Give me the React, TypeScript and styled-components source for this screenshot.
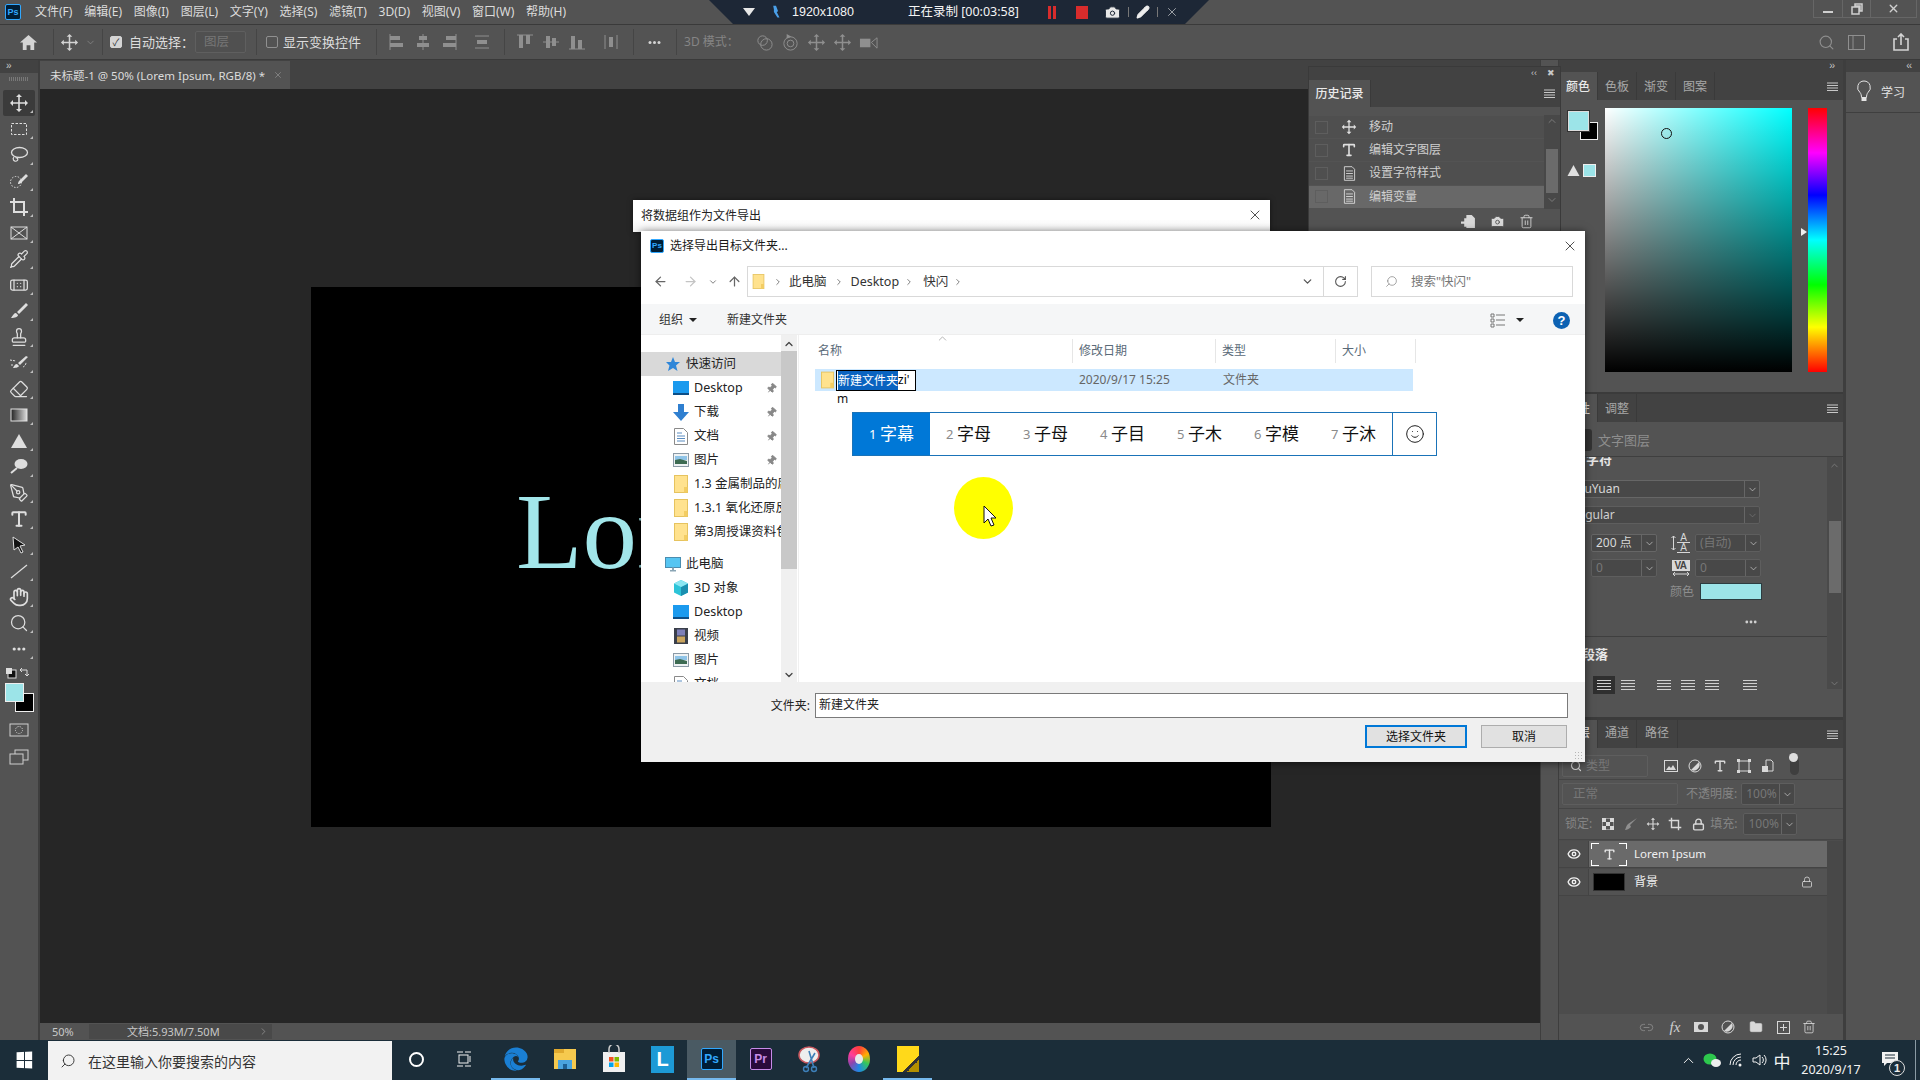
import React from "react";
import styled, { createGlobalStyle } from "styled-components";
import {
  Pipette, Bandage, Stamp, Eraser, PenTool, Type, Hand, Search, ChevronDown, ChevronUp, ChevronRight,
  X, ArrowLeft, ArrowRight, ArrowUp, RotateCw, Smile, Eye, Lock, Trash2, Camera, Link2, Folder,
  Pencil, Pin,
} from "lucide-react";
import { FaEdge } from "react-icons/fa";

const CJK = `"Noto Sans","Noto Sans CJK SC",sans-serif`;

const Global = createGlobalStyle`
  html, body { margin: 0; padding: 0; background: #535353; overflow: hidden; }
  * { box-sizing: border-box; }
  body { font-family: ${CJK}; font-size: 12px; }
`;

/* ---------- drawn icons ---------- */
type IP = { s?: number; color?: string };
const Svg: React.FC<React.PropsWithChildren<IP & { vb?: string; h?: number }>> = ({ s = 20, h, vb = "0 0 20 20", color, children }) => (
  <svg width={s} height={h ?? s} viewBox={vb} fill="currentColor" style={color ? { color } : undefined}>{children}</svg>
);
const MoveIco = (p: IP) => <Svg {...p}><path d="M10 1l3 3h-2.2v5.2H16V7l3 3-3 3v-2.2h-5.2V16H13l-3 3-3-3h2.2v-5.2H4V13l-3-3 3-3v2.2h5.2V4H7z" /></Svg>;
const Marquee = (p: IP) => <Svg {...p}><rect x="2.5" y="4.5" width="15" height="11" fill="none" stroke="currentColor" strokeDasharray="2.5 1.5" /></Svg>;
const Lasso = (p: IP) => <Svg {...p}><ellipse cx="10.5" cy="7.5" rx="8" ry="5" fill="none" stroke="currentColor" strokeWidth="1.3" /><path d="M5 12c-2 2 0 5 2.5 4s1-4-1-3" fill="none" stroke="currentColor" strokeWidth="1.2" /></Svg>;
const QuickSel = (p: IP) => <Svg {...p}><circle cx="7" cy="11" r="5.5" fill="none" stroke="currentColor" strokeDasharray="1.5 1.5" /><path d="M10 10l7-7 2 2-7 7c-1 1-3 1-3 1s0-2 1-3z" /></Svg>;
const CropIco = (p: IP) => <Svg {...p}><path d="M5 1v14h14M1 5h14v14" fill="none" stroke="currentColor" strokeWidth="2" /></Svg>;
const FrameIco = (p: IP) => <Svg {...p}><rect x="2" y="4" width="16" height="12" fill="none" stroke="currentColor" /><path d="M2 4l16 12M18 4L2 16" stroke="currentColor" /></Svg>;
const BrushIco = (p: IP) => <Svg {...p}><path d="M17 2l2 2-9 9-2-2zM7 12c-2 0-3 2-5 5 4 0 7-1 7-3z" /></Svg>;
const HistBrush = (p: IP) => <Svg {...p}><path d="M17 3l2 1-8 8-2-2zM8 11c-2 0-3 2-4 4 3 0 6-1 6-2z" /><path d="M1 7l6 1M4 12H1M14 14a5 5 0 0 0 3-5" fill="none" stroke="currentColor" strokeDasharray="2 1" /></Svg>;
const GradIco = (p: IP) => <Svg {...p}><defs><linearGradient id="gr1"><stop offset="0" stopColor="#222" /><stop offset="1" stopColor="#ddd" /></linearGradient></defs><rect x="2" y="4" width="16" height="12" fill="url(#gr1)" stroke="#e0e0e0" /></Svg>;
const TriIco = (p: IP) => <Svg {...p}><path d="M10 3l8 14H2z" /></Svg>;
const Dodge = (p: IP) => <Svg {...p}><ellipse cx="12" cy="7" rx="6.5" ry="5" /><path d="M8 11l-6 5" stroke="currentColor" strokeWidth="2" /></Svg>;
const PathSel = (p: IP) => <Svg {...p}><path d="M4 2l12 8-5 1 3 6-2 1-3-6-4 3z" fill="#111" stroke="#ddd" /></Svg>;
const LineIco = (p: IP) => <Svg {...p}><path d="M2 17L18 4" stroke="currentColor" strokeWidth="1.2" /></Svg>;
const Dots = (p: IP) => <Svg {...p}><circle cx="4" cy="10" r="2" /><circle cx="10" cy="10" r="2" /><circle cx="16" cy="10" r="2" /></Svg>;
const MaskIco = (p: IP) => <Svg {...p}><rect x="1" y="4" width="18" height="12" fill="none" stroke="currentColor" /><circle cx="10" cy="10" r="3.5" fill="none" stroke="currentColor" strokeDasharray="1.2 1.2" /></Svg>;
const ScreenIco = (p: IP) => <Svg {...p}><rect x="6" y="3" width="13" height="10" fill="none" stroke="currentColor" /><rect x="1" y="7" width="13" height="10" fill="#535353" stroke="currentColor" /></Svg>;
const Burger = () => <Svg s={13} vb="0 0 13 13"><path d="M1 3h11M1 5.5h11M1 8h11M1 10.5h11" stroke="currentColor" /></Svg>;
const DocIco = (p: IP) => <Svg {...p}><path d="M4 2h9l3 3v13H4z" fill="none" stroke="currentColor" /><path d="M6 7h8M6 10h8M6 13h8M6 15.5h8" stroke="currentColor" /></Svg>;
const Home = (p: IP) => <Svg {...p}><path d="M10 2l9 8h-3v8h-4v-5H8v5H4v-8H1z" /></Svg>;
const AlignIco: React.FC<{ kind: number }> = ({ kind }) => {
  const shapes: Record<number, React.ReactNode> = {
    0: <><path d="M3 2v16" stroke="currentColor" /><rect x="3" y="4" width="10" height="4" /><rect x="3" y="11" width="13" height="4" /></>,
    1: <><path d="M10 2v16" stroke="currentColor" /><rect x="6" y="4" width="8" height="4" /><rect x="4" y="11" width="12" height="4" /></>,
    2: <><path d="M17 2v16" stroke="currentColor" /><rect x="7" y="4" width="10" height="4" /><rect x="4" y="11" width="13" height="4" /></>,
    3: <><path d="M3 4h14M3 16h14" stroke="currentColor" /><rect x="5" y="8" width="10" height="4" /></>,
    4: <><path d="M2 3h16" stroke="currentColor" /><rect x="4" y="3" width="4" height="13" /><rect x="11" y="3" width="4" height="9" /></>,
    5: <><path d="M2 10h16" stroke="currentColor" /><rect x="5" y="4" width="4" height="12" /><rect x="11" y="6" width="4" height="8" /></>,
    6: <><path d="M2 17h16" stroke="currentColor" /><rect x="4" y="4" width="4" height="13" /><rect x="11" y="8" width="4" height="9" /></>,
    7: <><path d="M4 3v14M16 3v14" stroke="currentColor" /><rect x="8" y="5" width="4" height="10" /></>,
  };
  return <Svg s={20}>{shapes[kind]}</Svg>;
};
const Orbit = (p: IP) => <Svg {...p}><circle cx="8" cy="8" r="5" fill="none" stroke="currentColor" /><circle cx="12" cy="12" r="6" fill="none" stroke="currentColor" /></Svg>;
const Roll = (p: IP) => <Svg {...p}><circle cx="10" cy="11" r="7" fill="none" stroke="currentColor" /><circle cx="10" cy="11" r="3.5" fill="none" stroke="currentColor" /><path d="M6 1l5 3-5 2z" /></Svg>;
const Vid = (p: IP) => <Svg {...p}><rect x="1" y="6" width="11" height="9" /><path d="M13 10l6-5v11z" fill="none" stroke="currentColor" /></Svg>;
const FolderY: React.FC<{ w?: number; h?: number }> = ({ w = 14, h = 18 }) => (
  <svg width={w} height={h} viewBox="0 0 14 18"><rect x=".5" y=".5" width="13" height="17" fill="#ffe28e" stroke="#e6c35f" /><path d="M10 12v5.5h3.5V12z" fill="#f3cd63" /></svg>
);
const DesktopIco = () => <svg width="16" height="14" viewBox="0 0 16 14"><rect y="0" width="16" height="13" fill="#1b9aee" /><rect y="12" width="16" height="2" fill="#0d4e86" /></svg>;
const DownIco = () => <svg width="16" height="17" viewBox="0 0 16 17"><path d="M5 0h6v8h5l-8 9-8-9h5z" fill="#2f7fd0" /></svg>;
const DocBlue = () => <svg width="14" height="17" viewBox="0 0 14 17"><path d="M.5.5h9l4 4v12H.5z" fill="#fff" stroke="#8a8a8a" /><path d="M3 5h5M3 8h8M3 10.5h8M3 13h8" stroke="#5a8cc0" /></svg>;
const PicIco = () => <svg width="16" height="14" viewBox="0 0 16 14"><rect x=".5" y=".5" width="15" height="13" fill="#eef2f4" stroke="#8b9aa6" /><rect x="2" y="3" width="12" height="4" fill="#8fc4e8" /><path d="M2 7l5-1 7 2v3H2z" fill="#3d6b52" /></svg>;
const StarIco = () => <svg width="16" height="16" viewBox="0 0 16 16"><path d="M8 1l2 5h5l-4 3.5 1.5 5.5L8 12l-5 3 1.5-5.5L1 6h5z" fill="#2f86d8" /></svg>;
const PcIco = () => <svg width="16" height="15" viewBox="0 0 16 15"><rect x=".5" y=".5" width="15" height="10" fill="#56c5f2" stroke="#4a8db0" /><path d="M5 13h6v1.5H5zM7 10.5h2V13H7z" fill="#8aa5b5" /></svg>;
const CubeIco = () => <svg width="16" height="16" viewBox="0 0 16 16"><path d="M8 0l7 3.5v9L8 16l-7-3.5v-9z" fill="#2cc4d8" /><path d="M8 7l7-3.5v9L8 16z" fill="#1a8fb0" /><path d="M8 0l7 3.5L8 7 1 3.5z" fill="#8be6f2" /></svg>;
const FilmIco = () => <svg width="14" height="16" viewBox="0 0 14 16"><rect width="14" height="16" fill="#3a3f4a" /><rect x="3" y="1.5" width="8" height="6" fill="#7d7fb8" /><rect x="3" y="8.5" width="8" height="6" fill="#c9a45e" /></svg>;
const PsTile = styled.span<{ $s: number; $fs: number; $c?: string; $bg?: string }>`
  width: ${(p) => p.$s}px; height: ${(p) => p.$s}px; display: inline-flex; align-items: center; justify-content: center;
  background: ${(p) => p.$bg ?? "#001e36"}; color: ${(p) => p.$c ?? "#31a8ff"}; border: 1.5px solid ${(p) => p.$c ?? "#31a8ff"};
  border-radius: 2px; font: bold ${(p) => p.$fs}px/1 "Liberation Sans", sans-serif;
`;

/* ---------- root ---------- */
const Root = styled.div`position: relative; width: 1920px; height: 1080px; overflow: hidden; background: #535353; display: flex; flex-direction: column; color: #d4d4d4;`;

/* ---------- menu ---------- */
const MenuBar = styled.div`height: 25px; flex: none; display: flex; align-items: center; padding: 0 3px 0 5px; background: #535353; border-bottom: 1px solid #3a3a3a;`;
const MenuList = styled.nav`display: flex; margin-left: 14px; gap: 11.7px; font-size: 12px; line-height: 16px; color: #dcdcdc; white-space: nowrap;`;
const WinBox = styled.div`margin-left: auto; display: flex; height: 18px; align-self: flex-start; border: 1px solid #666; border-top: 0; color: #cfcfcf;`;
const WinBtn = styled.span<{ $w: number }>`width: ${(p) => p.$w}px; display: flex; align-items: center; justify-content: center; border-left: 1px solid #666; &:first-child { border-left: 0; }`;

/* ---------- recording overlay ---------- */
const RecBar = styled.div`
  position: absolute; left: 709px; top: 0; width: 500px; height: 24px; background: #1d2736; color: #f4f4f4;
  clip-path: polygon(0 0, 100% 0, 95.2% 100%, 4.8% 100%); display: flex; align-items: center; font-size: 12.5px; line-height: 16px; white-space: nowrap;
`;
const RecCaret = styled.span`margin-left: 34px; width: 0; height: 0; border-left: 6px solid transparent; border-right: 6px solid transparent; border-top: 8px solid #e8e8e8;`;
const RecPlane = styled.span`margin-left: 14px; display: flex;`;
const RecSize = styled.span`margin-left: 9px; font: 12.5px/16px "Liberation Sans", sans-serif;`;
const RecTime = styled.span`margin-left: 54px; width: 110px; `;
const RecPause = styled.span`margin-left: 30px; width: 8px; height: 13px; border-left: 3px solid #d82c2c; border-right: 3px solid #d82c2c;`;
const RecStop = styled.span`margin-left: 20px; width: 12px; height: 13px; background: #d82c2c;`;
const RecSep = styled.span`width: 1px; height: 10px; background: #777; margin: 0 7px;`;
const RecCam = styled.span`margin-left: 16px; display: flex;`;
const RecBtn = styled.span`display: flex;`;

/* ---------- options ---------- */
const OptionsBar = styled.div`height: 35px; flex: none; display: flex; align-items: center; padding: 0 4px 0 3px; background: #535353; border-bottom: 1px solid #3a3a3a; font-size: 13px; line-height: 18px; white-space: nowrap;`;
const OptSep = styled.span`width: 1px; height: 26px; background: #454545;`;
const OptIcon = styled.span<{ $w: number; $ml?: number; $dim?: boolean }>`
  width: ${(p) => p.$w}px; margin-left: ${(p) => p.$ml ?? 0}px; display: flex; align-items: center; justify-content: center; flex: none;
  color: ${(p) => (p.$dim ? "#8f8f8f" : "#d4d4d4")};
`;
const CheckBox = styled.span<{ $on?: boolean; $ml: number }>`
  width: 12px; height: 12px; margin-left: ${(p) => p.$ml}px; border-radius: 2px; flex: none; display: flex; align-items: center; justify-content: center;
  background: ${(p) => (p.$on ? "#d4d4d4" : "transparent")}; border: 1px solid ${(p) => (p.$on ? "#d4d4d4" : "#909090")}; color: #333; font-size: 10px; line-height: 1;
`;
const OptLabel = styled.span<{ $ml: number; $dim?: boolean }>`margin-left: ${(p) => p.$ml}px; color: ${(p) => (p.$dim ? "#858585" : "#dcdcdc")}; font-size: ${(p) => (p.$dim ? 12 : 13)}px; flex: none;`;
const OptSelect = styled.span`margin-left: 1px; width: 51px; height: 22px; border: 1px solid #5f5f5f; background: #505050; color: #777; font-size: 12.5px; line-height: 20px; padding-left: 8px; flex: none; border-radius: 2px;`;
const OptSpace = styled.span`flex: 1;`;

/* ---------- workspace ---------- */
const Workspace = styled.div`height: 980px; flex: none; display: flex;`;
const ToolStrip = styled.aside`width: 40px; flex: none; background: #535353; border-right: 2px solid #3e3e3e; display: flex; flex-direction: column; align-items: stretch;`;
const StripHead = styled.div`height: 13px; background: #424242; color: #c8c8c8; font: 10px/12px "Liberation Sans", sans-serif; padding-left: 6px; letter-spacing: -1px;`;
const Grip = styled.div`height: 17px; display: flex; justify-content: center; padding-top: 4px; &::before { content: ""; width: 20px; height: 4px; background: repeating-linear-gradient(90deg, #787878 0 1px, transparent 1px 2px); }`;
const ToolBtn = styled.div<{ $on?: boolean }>`
  height: 26px; margin: 0 3px; position: relative; display: flex; align-items: center; justify-content: center; color: #dedede;
  background: ${(p) => (p.$on ? "#3b3b3b" : "transparent")}; border-radius: 2px;
  &::after { content: ""; position: absolute; right: 2px; bottom: 3px; border-left: 3px solid transparent; border-bottom: 3px solid #bdbdbd; }
`;
const SwapRow = styled.div`height: 16px; margin-top: 3px; display: flex; justify-content: space-between; align-items: center; padding: 0 7px 0 5px;`;
const SwatchStack = styled.div`position: relative; height: 29px; margin-top: 2px;`;
const ForeSwatch = styled.span`position: absolute; left: 5px; top: 0; width: 19px; height: 19px; background: #9ce4e8; border: 1px solid #eee; z-index: 1;`;
const BackSwatch = styled.span`position: absolute; left: 15px; top: 10px; width: 19px; height: 19px; background: #000; border: 1px solid #eee;`;
const StripIcon = styled.div<{ $mt: number }>`margin-top: ${(p) => p.$mt}px; height: 20px; display: flex; justify-content: center; color: #cfcfcf;`;

const DocArea = styled.main`width: 1500px; flex: none; display: flex; flex-direction: column;`;
const TabBar = styled.div`height: 29px; flex: none; background: #424242; padding-top: 1px;`;
const DocTab = styled.div`width: 250px; height: 28px; background: #535353; color: #dcdcdc; display: flex; align-items: center; padding-left: 10px; font-size: 11.5px; white-space: nowrap; gap: 8px;`;
const Canvas = styled.div`flex: 1; background: #262626; display: flex; align-items: center; justify-content: center; padding-left: 2px;`;
const Artboard = styled.div`width: 960px; height: 540px; background: #000; overflow: hidden; padding: 190px 0 0 205px; margin-top: 2px;`;
const ArtText = styled.div`font: 109px/110px "Liberation Serif", serif; color: #a2e6ea; white-space: nowrap;`;
const StatusBar = styled.footer`height: 17px; flex: none; background: #535353; display: flex; align-items: center; font-size: 11px; color: #c8c8c8; line-height: 14px;`;
const ZoomVal = styled.span`margin-left: 12px; width: 37px;`;
const DocInfo = styled.span`width: 183px; height: 15px; background: #494949; padding-left: 38px; display: flex; align-items: center; justify-content: space-between; padding-right: 3px;`;

const Dock = styled.div`width: 18px; flex: none; background: #535353; border-left: 1px solid #3e3e3e;`;
const RightCol = styled.div`width: 285px; flex: none; background: #3b3b3b; border-left: 1px solid #3e3e3e; display: flex; flex-direction: column;`;
const Panel = styled.section<{ $h: number; $mt?: number }>`height: ${(p) => p.$h}px; margin-top: ${(p) => p.$mt ?? 0}px; background: #535353; display: flex; flex-direction: column; flex: none; overflow: hidden;`;
const PanelHead = styled.div`height: 12px; background: #424242; text-align: right; color: #c8c8c8; font: 10px/11px "Liberation Sans", sans-serif; padding-right: 9px; letter-spacing: -1px;`;
const TabStrip = styled.div<{ $pb?: number; $h?: number }>`height: ${(p) => p.$h ?? 28}px; flex: none; background: #424242; display: flex; align-items: stretch; padding-right: 4px; color: #ababab;`;
const Tab = styled.div<{ $on?: boolean; $w?: number; $lift?: number }>`
  width: ${(p) => p.$w ?? 39}px; display: flex; align-items: center; justify-content: center; font-size: 12px; white-space: nowrap; padding-bottom: ${(p) => p.$lift ?? 0}px;
  background: ${(p) => (p.$on ? "#535353" : "transparent")}; color: ${(p) => (p.$on ? "#eaeaea" : "#a8a8a8")}; border-right: 1px solid #3a3a3a; font-weight: ${(p) => (p.$on ? 500 : 400)};
`;
const MenuIcon = styled.div`margin-left: auto; display: flex; align-items: center; color: #c8c8c8;`;
const ColorBody = styled.div`flex: 1; display: flex; padding: 8px 0 0 0;`;
const SwatchCol = styled.div`width: 46px; flex: none; display: flex; flex-direction: column; position: relative;`;
const ColorFore = styled.span`position: absolute; left: 9px; top: 3px; width: 21px; height: 20px; background: #9ce4e8; border: 1px solid #ddd; outline: 1px solid #333; z-index: 1;`;
const ColorBack = styled.span`position: absolute; left: 21px; top: 14px; width: 18px; height: 18px; background: #000; border: 1px solid #eee;`;
const GamutRow = styled.div`position: absolute; left: 8px; top: 56px; display: flex; align-items: center; gap: 3px; color: #e0e0e0;`;
const GamutSwatch = styled.span`width: 13px; height: 13px; background: #9ce4e8; border: 1px solid #eee;`;
const Gradient = styled.div`width: 187px; height: 264px; position: relative; background: linear-gradient(to top, #000, rgba(0,0,0,0)), linear-gradient(to right, #fff, #00ffff);`;
const GradPick = styled.span`position: absolute; left: 56px; top: 20px; width: 11px; height: 11px; border-radius: 50%; border: 1px solid #111;`;
const Hue = styled.div`width: 19px; height: 264px; margin-left: 16px; position: relative; background: linear-gradient(to bottom, #f00, #f0f 17%, #00f 33%, #0ff 50%, #0f0 67%, #ff0 83%, #f00);`;
const HueArrow = styled.span`position: absolute; left: -7px; top: 120px; width: 0; height: 0; border-left: 6px solid #eee; border-top: 4px solid transparent; border-bottom: 4px solid transparent;`;

const KindRow = styled.div`height: 35px; flex: none; display: flex; align-items: center; padding: 1px 0 0 24px; border-bottom: 1px solid #3f3f3f; gap: 6px; color: #8e8e8e; font-size: 13px;`;
const KindIcon = styled.span`width: 9px; height: 22px; background: #333; border-radius: 0 3px 3px 0;`;
const PropScroll = styled.div`flex: 1; display: flex; min-height: 0;`;
const PropBody = styled.div`width: 268px; flex: none; display: flex; flex-direction: column; padding-left: 7px;`;
const Clipped = styled.div`height: 9px; overflow: hidden; display: flex; align-items: flex-end; color: #e6e6e6; font-weight: 700; font-size: 13px; line-height: 14px; padding-left: 20px;`;
const Drop = styled.div<{ $w: number; $mt?: number; $ml?: number; $dim?: boolean; $h?: number }>`
  width: ${(p) => p.$w}px; height: ${(p) => p.$h ?? 18}px; margin-top: ${(p) => p.$mt ?? 0}px; margin-left: ${(p) => p.$ml ?? 0}px; flex: none;
  display: flex; align-items: center; border: 1px solid ${(p) => (p.$dim ? "#5e5e5e" : "#666")}; border-radius: 2px; background: #484848;
  color: ${(p) => (p.$dim ? "#777" : "#d8d8d8")}; font-size: 12px; line-height: 14px; white-space: nowrap; padding-left: 4px;
`;
const DropArrow = styled.span<{ $dim?: boolean }>`margin-left: auto; width: 15px; height: 100%; flex: none; border-left: 1px solid #666; display: flex; align-items: center; justify-content: center; color: ${(p) => (p.$dim ? "#777" : "#cfcfcf")};`;
const PropRow = styled.div<{ $mt: number }>`display: flex; align-items: center; margin-top: ${(p) => p.$mt}px;`;
const PropIcon = styled.span`width: 19px; margin-left: 14px; flex: none; display: flex; flex-direction: column; align-items: center; color: #d8d8d8;`;
const VaGlyph = styled.span`font: bold 10px/11px "Liberation Sans", sans-serif; background: #d8d8d8; color: #444; width: 18px; text-align: center; letter-spacing: -.5px;`;
const LeadIcon = styled.span`width: 19px; margin-left: 14px; flex: none; display: flex; align-items: center; gap: 1px; color: #d8d8d8;`;
const AaCol = styled.span`display: flex; flex-direction: column; flex: 1;`;
const AaStack = styled.span`font: 10px/9px "Liberation Sans", sans-serif; color: #d8d8d8; text-align: center; border-bottom: 1px solid #d8d8d8;`;
const ColorLabel = styled.span`margin-left: 104px; width: 30px; color: #8e8e8e; font-size: 12px; line-height: 14px;`;
const TextSwatch = styled.span`width: 62px; height: 17px; background: #9ce4e8; border: 1px solid #2c3c40;`;
const More = styled.div`margin: 15px 0 0 178px; height: 8px; color: #cfcfcf; display: flex;`;
const Divider = styled.div`height: 1px; background: #3f3f3f; margin: 13px 0 0 -7px;`;
const ParaLabel = styled.div`margin: 8px 0 0 16px; color: #e6e6e6; font-weight: 700; font-size: 13px; line-height: 18px;`;
const AlignRow = styled.div`display: flex; margin: 13px 0 0 27px; height: 18px;`;
const AlignBtn = styled.span<{ $on?: boolean; $w: number }>`width: ${(p) => p.$w}px; height: 18px; display: flex; align-items: center; justify-content: flex-start; padding-left: 4px; background: ${(p) => (p.$on ? "#2f2f2f" : "transparent")}; color: #d0d0d0; flex: none;`;
const ParaIcon = styled.span`display: block; width: 14px; height: 11px; background: repeating-linear-gradient(to bottom, currentColor 0 1px, transparent 1px 3px);`;
const ScrollTrack = styled.div`width: 15px; background: #4a4a4a; display: flex; flex-direction: column; align-items: center; color: #7b7b7b; padding-top: 3px; height: 232px;`;
const ScrollThumb = styled.div`width: 12px; height: 72px; background: #6b6b6b; margin-top: 50px;`;
const ScrollEnd = styled.span`margin-top: auto; display: flex;`;

const FilterRow = styled.div<{ $h: number; $pt?: number }>`height: ${(p) => p.$h}px; padding-top: ${(p) => p.$pt ?? 0}px; flex: none; display: flex; align-items: center; border-bottom: 1px solid #454545; font-size: 12px; color: #7e7e7e; white-space: nowrap; line-height: 14px;`;
const FilterBox = styled.span`margin-left: 3px; width: 86px; height: 22px; border: 1px solid #5e5e5e; display: flex; align-items: center; gap: 4px; padding-left: 7px; border-radius: 2px; color: #777; font-size: 12px;`;
const LayerIcon = styled.span<{ $w: number; $ml?: number }>`width: ${(p) => p.$w}px; margin-left: ${(p) => p.$ml ?? 0}px; flex: none; display: flex; justify-content: center; color: #d8d8d8;`;
const ToggleWrap = styled.span`margin-left: 10px; width: 9px; height: 18px; border-radius: 5px; background: #3f3f3f; position: relative; &::before { content: ""; position: absolute; left: -1px; top: -4px; width: 9px; height: 9px; border-radius: 50%; background: #ddd; }`;
const BlendBox = styled.span`margin-left: 3px; width: 116px; height: 22px; border: 1px solid #5e5e5e; border-radius: 2px; padding-left: 10px; line-height: 20px; font-size: 12.5px; color: #777;`;
const LayerFill = styled.div`flex: 1; display: flex; min-height: 0; background: #4c4c4c; padding-top: 1px;`;
const LayerList = styled.div`width: 268px; flex: none; background: #4c4c4c; display: flex; flex-direction: column;`;
const LayerChannel = styled.div`flex: 1; background: #484848;`;
const LayerRow = styled.div<{ $on?: boolean; $mt?: number }>`height: 27px; margin-top: ${(p) => p.$mt ?? 0}px; display: flex; align-items: center; border-bottom: 1px solid #444; background: linear-gradient(to right, #4e4e4e 0 30px, ${(p) => (p.$on ? "#6a6a6a" : "#535353")} 30px);`;
const EyeSlot = styled.span`width: 30px; flex: none; display: flex; justify-content: center; color: #f0f0f0; border-right: 1px solid #444; height: 100%; align-items: center;`;
const TypeThumb = styled.span`width: 36px; height: 23px; margin-left: 2px; display: flex; align-items: center; justify-content: center; color: #e8e8e8; position: relative; background: conic-gradient(#fff 0 0) 0 0/8px 1px no-repeat, conic-gradient(#fff 0 0) 0 0/1px 6px no-repeat, conic-gradient(#fff 0 0) 100% 0/8px 1px no-repeat, conic-gradient(#fff 0 0) 100% 0/1px 6px no-repeat, conic-gradient(#fff 0 0) 0 100%/8px 1px no-repeat, conic-gradient(#fff 0 0) 0 100%/1px 6px no-repeat, conic-gradient(#fff 0 0) 100% 100%/8px 1px no-repeat, conic-gradient(#fff 0 0) 100% 100%/1px 6px no-repeat;`;
const BlackThumb = styled.span`width: 32px; height: 18px; margin-left: 4px; background: #000; border: 1px solid #333;`;
const LayerName = styled.span<{ $ml: number; $small?: boolean }>`margin-left: ${(p) => p.$ml}px; color: #f0f0f0; font-size: ${(p) => (p.$small ? 11.5 : 12)}px; line-height: 14px; white-space: nowrap;`;
const LockSlot = styled.span`margin-left: auto; margin-right: 14px; display: flex; color: #d8d8d8;`;
const LayerFoot = styled.div`height: 26px; flex: none; display: flex; align-items: center; padding-left: 77px; color: #d4d4d4; background: #535353;`;
const FxText = styled.span`font: italic 15px/16px "Liberation Serif", serif; color: #cfcfcf;`;

const LearnCol = styled.aside`width: 77px; flex: none; background: #535353; border-left: 3px solid #3e3e3e; display: flex; flex-direction: column;`;
const LearnBox = styled.div`height: 41px; border-bottom: 1px solid #3f3f3f; display: flex; align-items: center; padding-left: 10px; gap: 9px; color: #e4e4e4; font-size: 12px;`;

/* ---------- history floating panel ---------- */
const HistoryPanel = styled.section`position: absolute; left: 1309px; top: 67px; width: 251px; height: 165px; background: #535353; display: flex; flex-direction: column; box-shadow: 0 0 0 1px #3a3a3a;`;
const HistHead = styled.div`height: 13px; display: flex; justify-content: flex-end; gap: 10px; padding-right: 5px; background: #424242; color: #c8c8c8; font: 9px/13px "Liberation Sans", sans-serif;`;
const HistList = styled.div`margin-top: 9px; display: flex; flex-direction: column; gap: 1px; position: relative;`;
const HistRow = styled.div<{ $on?: boolean }>`width: 235px; height: 22.2px; display: flex; align-items: center; background: ${(p) => (p.$on ? "#686868" : "#4f4f4f")}; color: #cfcfcf; font-size: 12px; line-height: 14px;`;
const HistBox = styled.span`width: 13px; height: 13px; margin-left: 6px; border: 1px solid #5e5e5e;`;
const HistIcon = styled.span`width: 22px; margin-left: 10px; display: flex; justify-content: center; color: #e0e0e0; margin-right: 9px;`;
const HistScroll = styled.div`position: absolute; right: 0; top: -1px; width: 16px; height: 94px; background: #484848; display: flex; flex-direction: column; align-items: center; color: #7b7b7b;`;
const HistThumb = styled.div`width: 12px; height: 44px; background: #6b6b6b; margin: 22px 0 1px;`;
const HistFoot = styled.div`display: flex; gap: 14px; justify-content: flex-end; padding: 6px 26px 0 0; color: #d8d8d8;`;

/* ---------- dialogs ---------- */
const OuterDialog = styled.div`position: absolute; left: 633px; top: 200px; width: 637px; height: 32px; background: linear-gradient(#fff 60%, #f4f4f4); color: #222; display: flex; align-items: center; padding: 0 7px 3px 8px; font-size: 12px; justify-content: space-between; box-shadow: 0 0 5px rgba(0,0,0,.5);`;
const FileDialog = styled.div`position: absolute; left: 641px; top: 231px; width: 944px; height: 531px; background: #fff; color: #1a1a1a; display: flex; flex-direction: column; box-shadow: 0 1px 8px rgba(0,0,0,.6); font-size: 12px; line-height: 16px;`;
const DlgTitle = styled.div`height: 35px; flex: none; display: flex; align-items: center; padding: 0 7px 6px 9px; gap: 6px;`;
const DlgClose = styled.span`margin-left: auto; display: flex;`;
const DlgNav = styled.div`height: 31px; flex: none; display: flex; align-items: center; padding-left: 8px;`;
const NavBtn = styled.span<{ $w: number; $ml?: number; $dim?: boolean }>`width: ${(p) => p.$w}px; margin-left: ${(p) => p.$ml ?? 0}px; display: flex; justify-content: center; color: ${(p) => (p.$dim ? "#c4c4c4" : "#666")}; flex: none;`;
const AddrBox = styled.div`margin-left: 2px; width: 611px; height: 31px; border: 1px solid #d9d9d9; display: flex; align-items: center; padding-left: 4px; color: #333; font-size: 12.5px; white-space: nowrap;`;
const Crumb = styled.span<{ $ml: number }>`margin-left: ${(p) => p.$ml}px;`;
const CrumbSep = styled.span<{ $ml: number }>`margin-left: ${(p) => p.$ml}px; display: flex; color: #666;`;
const AddrEnd = styled.span`margin-left: auto; display: flex; align-items: center; height: 100%; color: #555;`;
const AddrCell = styled.span<{ $w: number; $line?: boolean; $ml?: number }>`width: ${(p) => p.$w}px; margin-left: ${(p) => p.$ml ?? 0}px; height: 100%; display: flex; align-items: center; justify-content: center; border-left: ${(p) => (p.$line ? "1px solid #d9d9d9" : "0")};`;
const SearchBox = styled.div`margin-left: 13px; width: 202px; height: 31px; border: 1px solid #d9d9d9; display: flex; align-items: center; padding-left: 13px; gap: 13px; color: #777; font-size: 12.5px;`;
const FlipIcon = styled.span`display: flex; transform: scaleX(-1);`;
const DlgTools = styled.div`height: 31px; margin-top: 7px; flex: none; background: #f5f6f7; display: flex; align-items: center; padding: 2px 15px 0 18px; color: #333; border-bottom: 1px solid #eee;`;
const ToolCaret = styled.span<{ $ml: number }>`margin-left: ${(p) => p.$ml}px; width: 0; height: 0; border-left: 4px solid transparent; border-right: 4px solid transparent; border-top: 4px solid #222;`;
const ToolText = styled.span<{ $ml: number }>`margin-left: ${(p) => p.$ml}px;`;
const ViewIcon = styled.span`margin-left: auto; display: flex; color: #777;`;
const HelpDot = styled.span`margin-left: 29px; width: 17px; height: 17px; border-radius: 50%; background: #0d62b3; color: #fff; font: bold 13px/17px "Liberation Sans", sans-serif; text-align: center;`;
const DlgContent = styled.div`height: 347px; flex: none; display: flex; overflow: hidden;`;
const NavPane = styled.div`width: 158px; flex: none; display: flex; border-right: 1px solid #f0f0f0;`;
const Tree = styled.div`width: 140px; flex: none; padding-top: 17px; overflow: hidden; display: flex; flex-direction: column;`;
const TreeRow = styled.div<{ $pl: number; $on?: boolean; $mt?: number }>`
  height: 24px; flex: none; margin-top: ${(p) => p.$mt ?? 0}px; padding-left: ${(p) => p.$pl}px; display: flex; align-items: center; gap: 5px; white-space: nowrap; color: #222; font-size: 12.5px;
  background: ${(p) => (p.$on ? "#d9d9d9" : "transparent")};
`;
const TreeIcon = styled.span`width: 16px; flex: none; display: flex; justify-content: center;`;
const PinSlot = styled.span`margin-left: auto; margin-right: 4px; display: flex; color: #888; transform: rotate(40deg);`;
const TreeScroll = styled.div`width: 16px; flex: none; background: #f0f0f0; display: flex; flex-direction: column; align-items: center; color: #444; padding-top: 3px; position: relative;`;
const TreeThumb = styled.div`width: 16px; height: 218px; background: #c8c8c8; margin-top: 1px;`;
const TreeDown = styled.span`margin-top: auto; padding-bottom: 1px; display: flex;`;
const FileList = styled.div`flex: 1; display: flex; flex-direction: column; min-width: 0; position: relative;`;
const HeadRow = styled.div`height: 30px; flex: none; display: flex; color: #5a6a78; font-size: 12px;`;
const HeadCell = styled.span<{ $w: number; $pl: number }>`width: ${(p) => p.$w}px; padding-left: ${(p) => p.$pl}px; padding-top: 4px; border-right: 1px solid #e6e6e6; height: 24px; margin-top: 4px; line-height: 16px; position: relative; display: flex; align-items: flex-start;`;
const SortMark = styled.span`position: absolute; left: 137px; top: -7px; color: #777; display: flex;`;
const SelRow = styled.div`margin: 4px 0 0 16px; width: 598px; height: 22px; background: #cce8ff; display: grid; grid-template-columns: 264px 144px 1fr; align-items: center; color: #666;`;
const NameCell = styled.span`display: flex; align-items: center; padding-left: 6px; gap: 2px;`;
const EditBox = styled.span`width: 80px; height: 21px; background: #fff; border: 1px solid #000; padding-left: 1px; color: #000; display: flex; align-items: center; white-space: nowrap; overflow: hidden; font-size: 12px;`;
const EditSel = styled.span`background: #0a63c0; color: #fff; line-height: 19px;`;
const CompRow = styled.div`padding-left: 38px; height: 16px; color: #111; line-height: 16px;`;
const DlgFoot = styled.div`height: 80px; flex: none; background: #f0f0f0; display: flex; flex-direction: column; padding-top: 11px; position: relative;`;
const FootRow = styled.div`display: flex; align-items: center;`;
const FootLabel = styled.label`width: 169px; text-align: right; color: #222;`;
const FootInput = styled.div`margin-left: 5px; width: 753px; height: 25px; border: 1px solid #7a7a7a; background: #fff; color: #222; padding-left: 3px; line-height: 22px;`;
const FootButtons = styled.div`display: flex; justify-content: flex-end; gap: 14px; padding-right: 18px; margin-top: 7px;`;
const DlgBtn = styled.span<{ $w: number; $on?: boolean }>`width: ${(p) => p.$w}px; height: 23px; background: #e1e1e1; border: ${(p) => (p.$on ? "2px solid #0078d7" : "1px solid #adadad")}; color: #111; display: flex; align-items: center; justify-content: center;`;
const GripDots = styled.span`position: absolute; right: 2px; bottom: 2px; width: 9px; height: 9px; background: radial-gradient(circle, #b5b5b5 1px, transparent 1px) 0 0/3px 3px;`;

/* ---------- IME + pointer ---------- */
const Ime = styled.div`position: absolute; left: 852px; top: 412px; width: 585px; height: 44px; background: #fff; border: 1px solid #1a73b8; display: flex; align-items: stretch; color: #111;`;
const Cand = styled.div<{ $on?: boolean }>`
  width: 77px; flex: none; display: flex; align-items: center; padding-left: 16px; gap: 3px; font-size: 17px; line-height: 22px; white-space: nowrap;
  background: ${(p) => (p.$on ? "#0078d7" : "transparent")}; color: ${(p) => (p.$on ? "#fff" : "#111")};
`;
const CandNum = styled.span<{ $on?: boolean }>`font-size: 13px; color: ${(p) => (p.$on ? "#fff" : "#8a8a8a")}; width: 8px;`;
const ImeEmoji = styled.div`margin-left: auto; width: 44px; border-left: 1px solid #1a73b8; display: flex; align-items: center; justify-content: center; color: #222;`;
const Spot = styled.div`position: absolute; left: 954px; top: 477px; width: 59px; height: 62px; border-radius: 50%; background: #ffff00;`;
const Cursor = styled.svg`position: absolute; left: 983px; top: 505px;`;

/* ---------- taskbar ---------- */
const Taskbar = styled.div`height: 40px; flex: none; background: #1b2d39; display: flex; align-items: stretch; color: #f2f2f2;`;
const StartBtn = styled.div`width: 48px; display: flex; align-items: center; justify-content: center;`;
const WinLogo = styled.span`width: 16px; height: 16px; display: grid; grid-template-columns: 1fr 1fr; gap: 1px; transform: perspective(40px) rotateY(-14deg); & > i { background: #fff; }`;
const SearchBar = styled.div`width: 344px; background: #f2f2f2; display: flex; align-items: center; padding-left: 12px; gap: 12px; color: #333; font-size: 14px; margin-top: 1px;`;
const TaskSlot = styled.div<{ $w?: number; $on?: boolean; $run?: boolean; $ml?: number }>`
  width: ${(p) => p.$w ?? 49}px; margin-left: ${(p) => p.$ml ?? 0}px; flex: none; display: flex; align-items: center; justify-content: center; position: relative;
  background: ${(p) => (p.$on ? "#4a5a63" : "transparent")};
  border-bottom: 2px solid ${(p) => (p.$run ? "#76b9ed" : "transparent")};
`;
const Ring = styled.span`width: 15px; height: 15px; border-radius: 50%; border: 2px solid #fff;`;
const LTile = styled.span`width: 23px; height: 27px; background: #1d9ad6; color: #fff; font: bold 20px/27px "Liberation Sans", sans-serif; text-align: center;`;
const ColorOrb = styled.span`width: 22px; height: 26px; border-radius: 50%; background: conic-gradient(#ff3d3d, #ffb000, #34c759, #1e88e5, #8e44ad, #ff3d9a, #ff3d3d); display: flex; align-items: center; justify-content: center; &::after { content: ""; width: 8px; height: 10px; background: #e9e9e9; border-radius: 50%; }`;
const Sticky = styled.span`width: 22px; height: 26px; background: linear-gradient(135deg, #ffd91a 0 65%, #333 65% 75%, #b38f00 75%);`;
const Tray = styled.div`margin-left: auto; display: flex; align-items: stretch;`;
const TraySlot = styled.span<{ $w?: number }>`width: ${(p) => p.$w ?? 24}px; display: flex; align-items: center; justify-content: center; flex: none; font-size: 17px;`;
const ImeMark = styled.span`margin-right: 4px;`;
const Clock = styled.div`width: 72px; display: flex; flex-direction: column; align-items: center; justify-content: center; font-size: 12.5px; line-height: 19px; padding-right: 2px;`;
const ShowDesk = styled.span`width: 5px; margin-left: 3px; border-left: 1px solid #8a9aa4;`;
const NoticeBadge = styled.span`position: absolute; left: 21px; top: 20px; width: 16px; height: 16px; border-radius: 50%; border: 1px solid #ddd; background: #1b2d39; color: #eee; font: bold 11px/14px "Liberation Sans", sans-serif; text-align: center;`;

/* ---------- data ---------- */
const menus = ["文件(F)", "编辑(E)", "图像(I)", "图层(L)", "文字(Y)", "选择(S)", "滤镜(T)", "3D(D)", "视图(V)", "窗口(W)", "帮助(H)"];
const Lu = (C: any, sw = 1.5) => (p: IP) => <C size={p.s ?? 18} strokeWidth={sw} />;
const tools: React.FC<IP>[] = [MoveIco, Marquee, Lasso, QuickSel, CropIco, FrameIco, Lu(Pipette), Lu(Bandage), BrushIco, Lu(Stamp), HistBrush, Lu(Eraser), GradIco, TriIco, Dodge, Lu(PenTool), Lu(Type, 2.4), PathSel, LineIco, Lu(Hand, 2), Lu(Search), Dots];
const cands = ["字幕", "字母", "子母", "子目", "子木", "字模", "子沐"];
const quick = [
  { t: "Desktop", i: <DesktopIco />, pin: true },
  { t: "下载", i: <DownIco />, pin: true },
  { t: "文档", i: <DocBlue />, pin: true },
  { t: "图片", i: <PicIco />, pin: true },
  { t: "1.3 金属制品的腐蚀与防护", i: <FolderY /> },
  { t: "1.3.1 氧化还原反应", i: <FolderY /> },
  { t: "第3周授课资料包", i: <FolderY /> },
];
const pc = [
  { t: "3D 对象", i: <CubeIco /> },
  { t: "Desktop", i: <DesktopIco /> },
  { t: "视频", i: <FilmIco /> },
  { t: "图片", i: <PicIco /> },
  { t: "文档", i: <DocBlue /> },
];
const Chev = ({ dim }: { dim?: boolean }) => <ChevronDown size={11} strokeWidth={1.5} color={dim ? "#777" : undefined} />;

export default function App() {
  return (
    <Root>
      <Global />
      <MenuBar>
        <PsTile $s={16} $fs={9}>Ps</PsTile>
        <MenuList>{menus.map((m) => <span key={m}>{m}</span>)}</MenuList>
        <WinBox>
          <WinBtn $w={28}><Svg s={10} vb="0 0 10 10"><rect y="7" width="10" height="2" /></Svg></WinBtn>
          <WinBtn $w={28}><Svg s={12} vb="0 0 12 12"><path d="M4 1h7v7H9V3H4zM1 4h7v7H1z" fill="none" stroke="currentColor" strokeWidth="1.5" /></Svg></WinBtn>
          <WinBtn $w={46}><X size={13} strokeWidth={2.6} /></WinBtn>
        </WinBox>
      </MenuBar>

      <OptionsBar>
        <OptIcon $w={50}><Home s={19} /></OptIcon>
        <OptSep />
        <OptIcon $w={30}><MoveIco s={19} /></OptIcon>
        <OptIcon $w={12} $dim><Chev /></OptIcon>
        <OptIcon $w={6} />
        <OptSep />
        <CheckBox $on $ml={7}>✓</CheckBox>
        <OptLabel $ml={7}>自动选择：</OptLabel>
        <OptSelect>图层</OptSelect>
        <OptIcon $w={10} />
        <OptSep />
        <CheckBox $ml={9} />
        <OptLabel $ml={5}>显示变换控件</OptLabel>
        <OptIcon $w={15} />
        <OptSep />
        {[0, 1, 2].map((k, i) => <OptIcon key={k} $w={26} $ml={i === 0 ? 7 : 0} $dim><AlignIco kind={k} /></OptIcon>)}
        <OptIcon $w={26} $ml={7} $dim><AlignIco kind={3} /></OptIcon>
        <OptIcon $w={9} />
        <OptSep />
        {[4, 5, 6].map((k, i) => <OptIcon key={k} $w={26} $ml={i === 0 ? 7 : 0} $dim><AlignIco kind={k} /></OptIcon>)}
        <OptIcon $w={26} $ml={8} $dim><AlignIco kind={7} /></OptIcon>
        <OptIcon $w={9} />
        <OptSep />
        <OptIcon $w={20} $ml={10}><Dots s={15} /></OptIcon>
        <OptIcon $w={12} />
        <OptSep />
        <OptLabel $ml={7} $dim>3D 模式：</OptLabel>
        <OptIcon $w={26} $ml={13} $dim><Orbit s={19} /></OptIcon>
        <OptIcon $w={26} $dim><Roll s={19} /></OptIcon>
        <OptIcon $w={26} $dim><MoveIco s={19} /></OptIcon>
        <OptIcon $w={26} $dim><MoveIco s={19} /></OptIcon>
        <OptIcon $w={26} $dim><Vid s={19} /></OptIcon>
        <OptSpace />
        <OptIcon $w={30} $dim><Search size={17} strokeWidth={1.6} /></OptIcon>
        <OptIcon $w={30} $dim><Svg s={17} vb="0 0 17 17"><rect x=".5" y="1.5" width="16" height="14" fill="none" stroke="currentColor" /><path d="M5 2v13" stroke="currentColor" /></Svg></OptIcon>
        <OptIcon $w={15} />
        <OptIcon $w={30}><Svg s={18} vb="0 0 18 18"><path d="M5 6H2v11h14V6h-3M9 12V1M6 4l3-3 3 3" fill="none" stroke="currentColor" strokeWidth="1.6" /></Svg></OptIcon>
      </OptionsBar>

      <Workspace>
        <ToolStrip>
          <StripHead>››</StripHead>
          <Grip />
          {tools.map((T, i) => <ToolBtn key={i} $on={i === 0}><T s={i === 21 ? 16 : 20} /></ToolBtn>)}
          <SwapRow>
            <Svg s={12} vb="0 0 12 12"><rect x="3" y="3" width="8" height="8" fill="#111" stroke="#ddd" /><rect x="1" y="1" width="6" height="6" fill="#ddd" /></Svg>
            <Svg s={12} vb="0 0 12 12"><path d="M1 3h7v6M1 3l2-2M1 3l2 2M8 9l-2-2M8 9l2-2" fill="none" stroke="#ddd" /></Svg>
          </SwapRow>
          <SwatchStack><ForeSwatch /><BackSwatch /></SwatchStack>
          <StripIcon $mt={8}><MaskIco s={20} /></StripIcon>
          <StripIcon $mt={7}><ScreenIco s={20} /></StripIcon>
        </ToolStrip>

        <DocArea>
          <TabBar>
            <DocTab>未标题-1 @ 50% (Lorem Ipsum, RGB/8) *<X size={10} strokeWidth={1.2} color="#aaa" /></DocTab>
          </TabBar>
          <Canvas>
            <Artboard><ArtText>Lorem Ipsum</ArtText></Artboard>
          </Canvas>
          <StatusBar>
            <ZoomVal>50%</ZoomVal>
            <DocInfo>文档:5.93M/7.50M<ChevronRight size={11} strokeWidth={1} /></DocInfo>
          </StatusBar>
        </DocArea>

        <Dock />

        <RightCol>
          <Panel $h={332}>
            <PanelHead>››</PanelHead>
            <TabStrip>
              <Tab $on>颜色</Tab><Tab>色板</Tab><Tab>渐变</Tab><Tab>图案</Tab>
              <MenuIcon><Burger /></MenuIcon>
            </TabStrip>
            <ColorBody>
              <SwatchCol>
                <ColorFore /><ColorBack />
                <GamutRow><Svg s={13} vb="0 0 13 13"><path d="M6.5 1l6 11h-12z" /></Svg><GamutSwatch /></GamutRow>
              </SwatchCol>
              <Gradient><GradPick /></Gradient>
              <Hue><HueArrow /></Hue>
            </ColorBody>
          </Panel>

          <Panel $h={323} $mt={2}>
            <TabStrip>
              <Tab $on>属性</Tab><Tab>调整</Tab>
              <MenuIcon><Burger /></MenuIcon>
            </TabStrip>
            <KindRow><KindIcon />文字图层</KindRow>
            <PropScroll>
              <PropBody>
                <Clipped>字符</Clipped>
                <Drop $w={194} $mt={14}>YouYuan<DropArrow><Chev /></DropArrow></Drop>
                <Drop $w={194} $mt={8} $dim style={{ color: "#d0d0d0" }}>Regular<DropArrow $dim><Chev dim /></DropArrow></Drop>
                <PropRow $mt={9}>
                  <Drop $w={66} $ml={25}>200 点<DropArrow><Chev /></DropArrow></Drop>
                  <LeadIcon>
                    <Svg s={5} h={16} vb="0 0 5 16"><path d="M2.5 1v14M.5 3l2-2 2 2M.5 13l2 2 2-2" fill="none" stroke="currentColor" /></Svg>
                    <AaCol><AaStack>A</AaStack><AaStack>A</AaStack></AaCol>
                  </LeadIcon>
                  <Drop $w={66} $ml={5} $dim>(自动)<DropArrow><Chev /></DropArrow></Drop>
                </PropRow>
                <PropRow $mt={6}>
                  <Drop $w={66} $ml={25} $dim>0<DropArrow><Chev /></DropArrow></Drop>
                  <PropIcon><VaGlyph>VA</VaGlyph><Svg s={18} h={6} vb="0 0 18 6"><path d="M1 3h16M1 3l2-2M1 3l2 2M17 3l-2-2M17 3l-2 2" fill="none" stroke="currentColor" /></Svg></PropIcon>
                  <Drop $w={66} $ml={5} $dim>0<DropArrow><Chev /></DropArrow></Drop>
                </PropRow>
                <PropRow $mt={6}><ColorLabel>颜色</ColorLabel><TextSwatch /></PropRow>
                <More><Dots s={14} /></More>
                <Divider />
                <ParaLabel>段落</ParaLabel>
                <AlignRow>
                  <AlignBtn $w={22} $on><ParaIcon /></AlignBtn>
                  <AlignBtn $w={36} style={{ marginLeft: 2 }}><ParaIcon /></AlignBtn>
                  <AlignBtn $w={24}><ParaIcon /></AlignBtn>
                  <AlignBtn $w={24}><ParaIcon /></AlignBtn>
                  <AlignBtn $w={38}><ParaIcon /></AlignBtn>
                  <AlignBtn $w={24}><ParaIcon /></AlignBtn>
                </AlignRow>
              </PropBody>
              <ScrollTrack>
                <ChevronUp size={11} />
                <ScrollThumb />
                <ScrollEnd><ChevronDown size={11} /></ScrollEnd>
              </ScrollTrack>
            </PropScroll>
          </Panel>

          <Panel $h={320} $mt={3}>
            <TabStrip>
              <Tab $on $lift={4}>图层</Tab><Tab $lift={4}>通道</Tab><Tab $w={41} $lift={4}>路径</Tab>
              <MenuIcon><Burger /></MenuIcon>
            </TabStrip>
            <FilterRow $h={32} $pt={4}>
              <FilterBox><Search size={12} strokeWidth={2.4} color="#ccc" />类型</FilterBox>
              <LayerIcon $w={24} $ml={11}><Svg s={14} vb="0 0 14 14"><rect x=".5" y="1.5" width="13" height="11" fill="none" stroke="currentColor" /><path d="M2 11l3-4 2 2 2-3 3 5z" /></Svg></LayerIcon>
              <LayerIcon $w={24}><Svg s={14} vb="0 0 14 14"><circle cx="7" cy="7" r="6" fill="none" stroke="currentColor" /><path d="M11 3L3 11a6 6 0 0 0 8-8z" /></Svg></LayerIcon>
              <LayerIcon $w={25}><Type size={14} strokeWidth={2.6} /></LayerIcon>
              <LayerIcon $w={23}><Svg s={14} vb="0 0 14 14"><rect x="2" y="2" width="10" height="10" fill="none" stroke="currentColor" /><path d="M0 0h3v3H0zM11 0h3v3h-3zM0 11h3v3H0zM11 11h3v3h-3z" /></Svg></LayerIcon>
              <LayerIcon $w={25}><Svg s={14} vb="0 0 14 14"><path d="M5 1h5l2 2v9H5z" fill="none" stroke="currentColor" /><rect x="1" y="7" width="6" height="6" /></Svg></LayerIcon>
              <ToggleWrap />
            </FilterRow>
            <FilterRow $h={29}>
              <BlendBox>正常</BlendBox>
              <OptLabel $ml={8} $dim>不透明度:</OptLabel>
              <Drop $w={54} $h={22} $ml={4} $dim>100%<DropArrow><Chev /></DropArrow></Drop>
            </FilterRow>
            <FilterRow $h={31}>
              <OptLabel $ml={6} $dim>锁定:</OptLabel>
              <LayerIcon $w={22} $ml={5}><Svg s={12} vb="0 0 12 12"><path d="M0 0h4v4H0zM8 0h4v4H8zM4 4h4v4H4zM0 8h4v4H0zM8 8h4v4H8z" /><rect width="12" height="12" fill="none" stroke="currentColor" /></Svg></LayerIcon>
              <LayerIcon $w={24}><Svg s={14} vb="0 0 14 14" color="#8f8f8f"><path d="M13 1L6 8l1 2c-2 2-4 3-6 3 1-2 1-4 3-6z" /></Svg></LayerIcon>
              <LayerIcon $w={20}><MoveIco s={14} /></LayerIcon>
              <LayerIcon $w={24}><CropIco s={14} /></LayerIcon>
              <LayerIcon $w={22}><Lock size={13} strokeWidth={2.6} /></LayerIcon>
              <OptLabel $ml={1} $dim>填充:</OptLabel>
              <Drop $w={54} $h={22} $ml={6} $dim>100%<DropArrow><Chev /></DropArrow></Drop>
            </FilterRow>
            <LayerFill>
              <LayerList>
                <LayerRow $on>
                  <EyeSlot><Eye size={14} strokeWidth={2.4} /></EyeSlot>
                  <TypeThumb><Type size={13} strokeWidth={2.6} /></TypeThumb>
                  <LayerName $ml={7} $small>Lorem Ipsum</LayerName>
                </LayerRow>
                <LayerRow $mt={1}>
                  <EyeSlot><Eye size={14} strokeWidth={2.4} /></EyeSlot>
                  <BlackThumb />
                  <LayerName $ml={9}>背景</LayerName>
                  <LockSlot><Lock size={12} strokeWidth={1.6} /></LockSlot>
                </LayerRow>
              </LayerList>
              <LayerChannel />
            </LayerFill>
            <LayerFoot>
              <LayerIcon $w={20}><Link2 size={15} strokeWidth={1.4} color="#8a8a8a" /></LayerIcon>
              <LayerIcon $w={26} $ml={6}><FxText>fx</FxText></LayerIcon>
              <LayerIcon $w={26}><Svg s={14} vb="0 0 14 14"><path d="M0 2h14v10H0zM7 4a3 3 0 1 0 0 6 3 3 0 0 0 0-6z" fillRule="evenodd" /></Svg></LayerIcon>
              <LayerIcon $w={28}><Svg s={14} vb="0 0 14 14"><circle cx="7" cy="7" r="6" fill="none" stroke="currentColor" /><path d="M11 3L3 11a6 6 0 0 0 8-8z" /></Svg></LayerIcon>
              <LayerIcon $w={28}><Folder size={14} fill="currentColor" strokeWidth={1} /></LayerIcon>
              <LayerIcon $w={26}><Svg s={13} vb="0 0 13 13"><rect x=".5" y=".5" width="12" height="12" fill="none" stroke="currentColor" /><path d="M6.5 3v7M3 6.5h7" stroke="currentColor" /></Svg></LayerIcon>
              <LayerIcon $w={26}><Trash2 size={14} strokeWidth={1.4} /></LayerIcon>
            </LayerFoot>
          </Panel>
        </RightCol>

        <LearnCol>
          <PanelHead>‹‹</PanelHead>
          <LearnBox>
            <Svg s={16} h={24} vb="0 0 16 24"><path d="M8 1a6.5 6.5 0 0 0-4 11.5c1 1 1.5 3 1.5 5h5c0-2 .5-4 1.5-5A6.5 6.5 0 0 0 8 1z" fill="none" stroke="currentColor" /><rect x="5.5" y="18" width="5" height="3" /></Svg>
            学习
          </LearnBox>
        </LearnCol>
      </Workspace>

      <Taskbar>
        <StartBtn><WinLogo><i /><i /><i /><i /></WinLogo></StartBtn>
        <SearchBar><FlipIcon><Search size={16} strokeWidth={1.4} /></FlipIcon>在这里输入你要搜索的内容</SearchBar>
        <TaskSlot $w={48}><Ring /></TaskSlot>
        <TaskSlot $w={48}><Svg s={16} vb="0 0 16 16"><rect x="3" y="4" width="9" height="8" fill="none" stroke="currentColor" /><path d="M1 1h6M9 1h6M1 15h6M9 15h6M14 5v6" stroke="currentColor" /></Svg></TaskSlot>
        <TaskSlot $ml={3} $run><FaEdge size={24} color="#1a7fd4" /></TaskSlot>
        <TaskSlot><svg width="24" height="26" viewBox="0 0 24 26"><rect x="1" y="3" width="22" height="20" fill="#f6c94e" /><rect x="1" y="3" width="10" height="4" fill="#e0a92e" /><rect x="5" y="14" width="14" height="9" fill="#4aa3df" /><rect x="10" y="18" width="4" height="5" fill="#1d5f94" /></svg></TaskSlot>
        <TaskSlot><svg width="24" height="28" viewBox="0 0 24 28"><rect x="1" y="7" width="22" height="20" fill="#f0f0f0" /><path d="M7 8V4a5 5 0 0 1 10 0v4" fill="none" stroke="#ccc" strokeWidth="1.5" /><rect x="7" y="12" width="4.5" height="4.5" fill="#f25022" /><rect x="12.5" y="12" width="4.5" height="4.5" fill="#7fba00" /><rect x="7" y="17.5" width="4.5" height="4.5" fill="#00a4ef" /><rect x="12.5" y="17.5" width="4.5" height="4.5" fill="#ffb900" /></svg></TaskSlot>
        <TaskSlot><LTile>L</LTile></TaskSlot>
        <TaskSlot $on $run><PsTile $s={22} $fs={12}>Ps</PsTile></TaskSlot>
        <TaskSlot><PsTile $s={22} $fs={12} $c="#c78be8" $bg="#2a0a3c">Pr</PsTile></TaskSlot>
        <TaskSlot><svg width="26" height="28" viewBox="0 0 26 28"><ellipse cx="12" cy="10" rx="10" ry="8" fill="#eee" stroke="#c9585f" strokeWidth="1.5" /><path d="M12 6l5 17M18 8L9 23" stroke="#3d7fb8" strokeWidth="1.6" /><circle cx="17" cy="24" r="2.5" fill="none" stroke="#3d7fb8" strokeWidth="1.4" /><circle cx="9" cy="24" r="2.5" fill="none" stroke="#3d7fb8" strokeWidth="1.4" /></svg></TaskSlot>
        <TaskSlot><ColorOrb /></TaskSlot>
        <TaskSlot $run><Sticky /></TaskSlot>
        <Tray>
          <TraySlot><ChevronUp size={17} strokeWidth={1.4} /></TraySlot>
          <TraySlot><svg width="18" height="16" viewBox="0 0 18 16"><ellipse cx="7" cy="7" rx="6.5" ry="5.5" fill="#2dc84d" /><ellipse cx="13" cy="11" rx="5" ry="4" fill="#eee" /></svg></TraySlot>
          <TraySlot><Svg s={16} vb="0 0 16 16"><path d="M2 13a11 11 0 0 1 11-11M5 13a8 8 0 0 1 8-8M8 13a5 5 0 0 1 5-5" fill="none" stroke="currentColor" /><circle cx="12" cy="13" r="1.5" /></Svg></TraySlot>
          <TraySlot><Svg s={16} vb="0 0 16 16"><path d="M1 6h3l4-3v10l-4-3H1z" fill="none" stroke="currentColor" /><path d="M10 5a4 4 0 0 1 0 6M12 3a7 7 0 0 1 0 10" fill="none" stroke="currentColor" /></Svg></TraySlot>
          <TraySlot><ImeMark>中</ImeMark></TraySlot>
          <Clock><span>15:25</span><span>2020/9/17</span></Clock>
          <TaskSlot $w={44}>
            <Svg s={18} vb="0 0 18 18"><path d="M1 2h16v11H6l-3 3v-3H1z" /><path d="M4 5h10M4 8h10" stroke="#1b2d39" /></Svg>
            <NoticeBadge>1</NoticeBadge>
          </TaskSlot>
          <ShowDesk />
        </Tray>
      </Taskbar>

      <RecBar>
        <RecCaret />
        <RecPlane><Svg s={14} color="#4a9fe8"><path d="M6 1h4l3 8-2 1 4 8h-3l-5-8V6z" /></Svg></RecPlane>
        <RecSize>1920x1080</RecSize>
        <RecTime>正在录制 [00:03:58]</RecTime>
        <RecPause />
        <RecStop />
        <RecCam><Camera size={17} fill="#e8e8e8" color="#1d2736" strokeWidth={1.4} /></RecCam>
        <RecSep />
        <RecBtn><Pencil size={14} fill="#eee" color="#eee" /></RecBtn>
        <RecSep />
        <RecBtn><X size={14} strokeWidth={1} /></RecBtn>
      </RecBar>

      <HistoryPanel>
        <HistHead><span>‹‹</span><span>✖</span></HistHead>
        <TabStrip $h={27}>
          <Tab $on $w={62} $lift={2}>历史记录</Tab>
          <MenuIcon><Burger /></MenuIcon>
        </TabStrip>
        <HistList>
          <HistRow><HistBox /><HistIcon><MoveIco s={16} /></HistIcon>移动</HistRow>
          <HistRow><HistBox /><HistIcon><Type size={16} strokeWidth={2.4} /></HistIcon>编辑文字图层</HistRow>
          <HistRow><HistBox /><HistIcon><DocIco s={17} /></HistIcon>设置字符样式</HistRow>
          <HistRow $on><HistBox /><HistIcon><DocIco s={17} /></HistIcon>编辑变量</HistRow>
          <HistScroll><ChevronUp size={12} /><HistThumb /><ChevronDown size={12} /></HistScroll>
        </HistList>
        <HistFoot>
          <Svg s={15} vb="0 0 14 14"><path d="M5 1h5l3 3v9H5zM0 7h3V4h2v3h3v2H5v3H3V9H0z" /></Svg>
          <Camera size={15} fill="#d8d8d8" color="#535353" strokeWidth={1.4} />
          <Trash2 size={15} strokeWidth={1.4} />
        </HistFoot>
      </HistoryPanel>

      <OuterDialog>将数据组作为文件导出<X size={16} strokeWidth={1.1} color="#111" /></OuterDialog>

      <FileDialog>
        <DlgTitle>
          <PsTile $s={14} $fs={8}>Ps</PsTile>选择导出目标文件夹...
          <DlgClose><X size={16} strokeWidth={1.1} color="#111" /></DlgClose>
        </DlgTitle>
        <DlgNav>
          <NavBtn $w={22}><ArrowLeft size={15} /></NavBtn>
          <NavBtn $w={22} $ml={8} $dim><ArrowRight size={15} /></NavBtn>
          <NavBtn $w={12} $ml={6}><ChevronDown size={10} /></NavBtn>
          <NavBtn $w={22} $ml={4}><ArrowUp size={15} /></NavBtn>
          <AddrBox>
            <FolderY w={13} h={15} />
            <CrumbSep $ml={8}><ChevronRight size={10} /></CrumbSep>
            <Crumb $ml={6}>此电脑</Crumb>
            <CrumbSep $ml={7}><ChevronRight size={10} /></CrumbSep>
            <Crumb $ml={7}>Desktop</Crumb>
            <CrumbSep $ml={5}><ChevronRight size={10} /></CrumbSep>
            <Crumb $ml={9}>快闪</Crumb>
            <CrumbSep $ml={5}><ChevronRight size={10} /></CrumbSep>
            <AddrEnd>
              <AddrCell $w={14}><ChevronDown size={13} strokeWidth={2.4} /></AddrCell>
              <AddrCell $w={34} $ml={9} $line><RotateCw size={13} strokeWidth={2} /></AddrCell>
            </AddrEnd>
          </AddrBox>
          <SearchBox><FlipIcon><Search size={13} strokeWidth={1.2} /></FlipIcon>搜索"快闪"</SearchBox>
        </DlgNav>
        <DlgTools>
          组织<ToolCaret $ml={6} />
          <ToolText $ml={30}>新建文件夹</ToolText>
          <ViewIcon><Svg s={16} vb="0 0 16 16"><path d="M1 2h3v3H1zM1 7h3v3H1zM1 12h3v3H1zM6 3h9M6 8h9M6 13h9" fill="none" stroke="currentColor" /></Svg></ViewIcon>
          <ToolCaret $ml={10} />
          <HelpDot>?</HelpDot>
        </DlgTools>
        <DlgContent>
          <NavPane>
            <Tree>
              <TreeRow $pl={24} $on><TreeIcon><StarIco /></TreeIcon>快速访问</TreeRow>
              {quick.map((r) => (
                <TreeRow key={r.t} $pl={32}>
                  <TreeIcon>{r.i}</TreeIcon>{r.t}
                  {r.pin && <PinSlot><Pin size={11} fill="#888" /></PinSlot>}
                </TreeRow>
              ))}
              <TreeRow $pl={24} $mt={8}><TreeIcon><PcIco /></TreeIcon>此电脑</TreeRow>
              {pc.map((r, i) => <TreeRow key={i} $pl={32}><TreeIcon>{r.i}</TreeIcon>{r.t}</TreeRow>)}
            </Tree>
            <TreeScroll>
              <ChevronUp size={12} strokeWidth={2.6} />
              <TreeThumb />
              <TreeDown><ChevronDown size={12} strokeWidth={2.6} /></TreeDown>
            </TreeScroll>
          </NavPane>
          <FileList>
            <HeadRow>
              <HeadCell $w={274} $pl={19}>名称<SortMark><ChevronUp size={13} strokeWidth={1} /></SortMark></HeadCell>
              <HeadCell $w={143} $pl={6}>修改日期</HeadCell>
              <HeadCell $w={120} $pl={6}>类型</HeadCell>
              <HeadCell $w={80} $pl={6}>大小</HeadCell>
            </HeadRow>
            <SelRow>
              <NameCell><FolderY w={13} h={18} /><EditBox><EditSel>新建文件夹</EditSel>zi'</EditBox></NameCell>
              <span>2020/9/17 15:25</span>
              <span>文件夹</span>
            </SelRow>
            <CompRow>m</CompRow>
          </FileList>
        </DlgContent>
        <DlgFoot>
          <FootRow><FootLabel>文件夹:</FootLabel><FootInput>新建文件夹</FootInput></FootRow>
          <FootButtons><DlgBtn $w={102} $on>选择文件夹</DlgBtn><DlgBtn $w={86}>取消</DlgBtn></FootButtons>
          <GripDots />
        </DlgFoot>
      </FileDialog>

      <Ime>
        {cands.map((c, i) => (
          <Cand key={c} $on={i === 0}><CandNum $on={i === 0}>{i + 1}</CandNum>{c}</Cand>
        ))}
        <ImeEmoji><Smile size={20} strokeWidth={1.2} /></ImeEmoji>
      </Ime>
      <Spot />
      <Cursor width="14" height="22" viewBox="0 0 14 22"><path d="M1 1v17l4-4 3 7 3-1-3-7h5z" fill="#fff" stroke="#111" /></Cursor>
    </Root>
  );
}
